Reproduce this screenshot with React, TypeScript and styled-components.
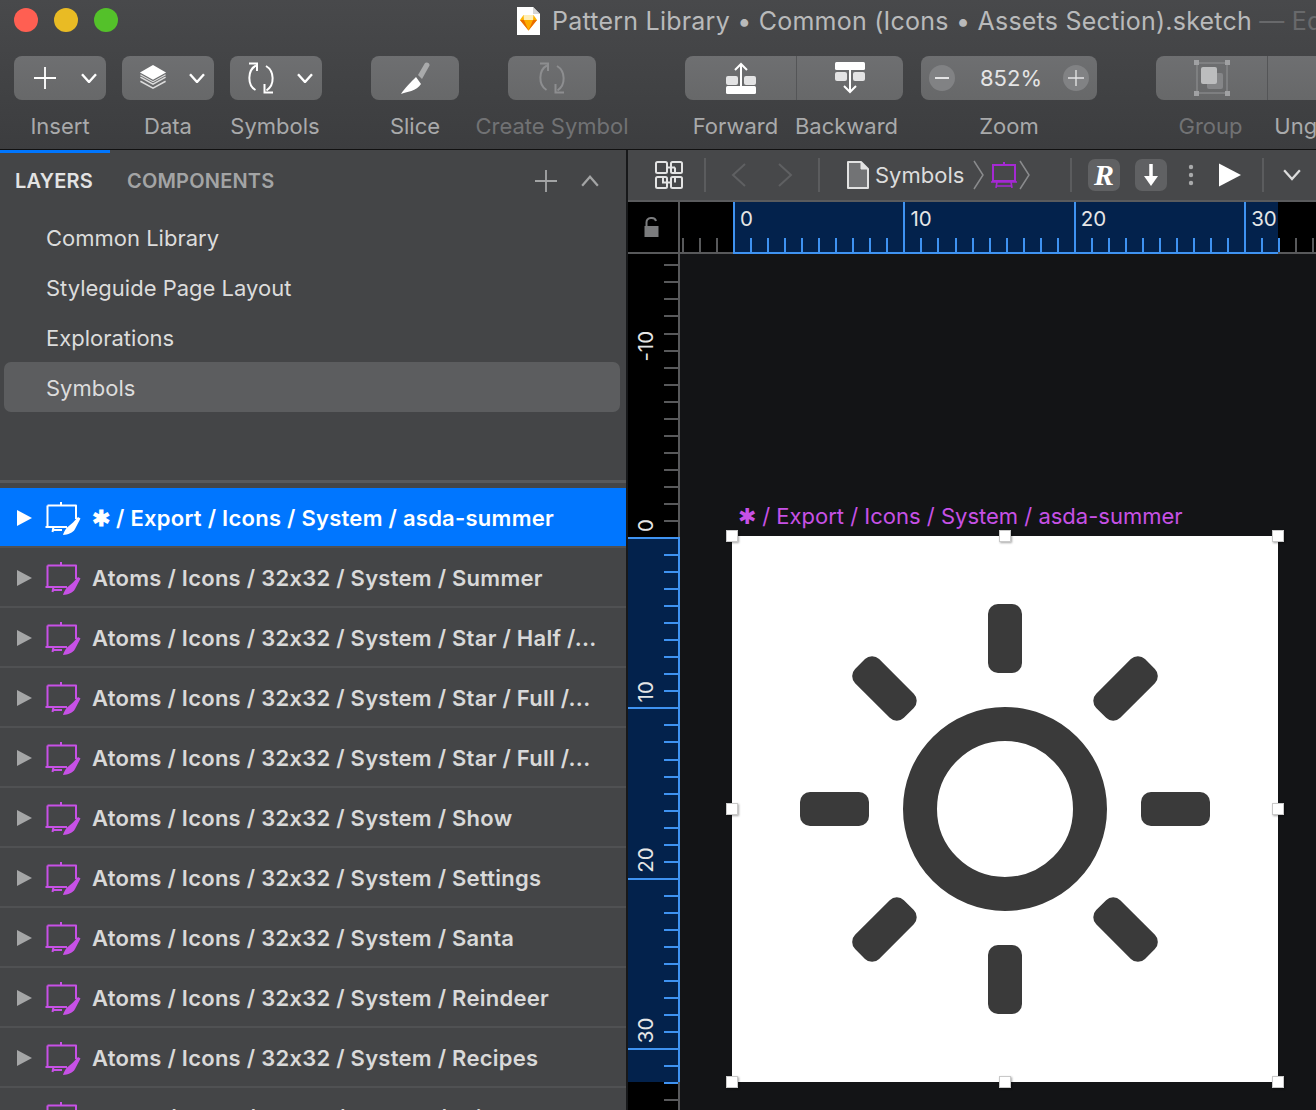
import React from "react";
import styled, { createGlobalStyle } from "styled-components";

const FONT = `Inter, "Liberation Sans", sans-serif`;

const GlobalStyle = createGlobalStyle`
  html, body {
    margin: 0;
    padding: 0;
    background: #131416;
    font-family: ${FONT};
    font-feature-settings: "calt" 0;
  }
  * { box-sizing: border-box; }
`;

const BLUE_RULER = "#03224c";
const BLUE_LINE = "#3f93f2";
const GREY_TICK = "#58595b";
const PURPLE = "#c751e6";

const Window = styled.div`
  width: 1316px;
  height: 1110px;
  overflow: hidden;
  display: flex;
  flex-direction: column;
`;

/* ---------- top header ---------- */

const Header = styled.header`
  height: 150px;
  flex: none;
  background: linear-gradient(#48494b, #3c3d3f);
  border-bottom: 1px solid #111;
  overflow: hidden;
`;

const TitleBar = styled.div`
  height: 56px;
  display: flex;
  align-items: flex-start;
  padding: 8px 0 0 14px;
`;

const Light = styled.span<{ $c: string }>`
  width: 24px;
  height: 24px;
  border-radius: 50%;
  background: ${(p) => p.$c};
  margin-right: 16px;
  flex: none;
`;

const DocTitle = styled.div`
  margin-left: 383px;
  margin-top: -2px;
  display: flex;
  align-items: center;
  gap: 12px;
  white-space: nowrap;
`;

const TitleText = styled.span`
  font-size: 25px;
  line-height: 30px;
  color: #b9babb;
  letter-spacing: 0.23px;
  span { color: #68696b; }
`;

const Toolbar = styled.div`
  display: flex;
  padding-left: 14px;
  white-space: nowrap;
`;

const ToolItem = styled.div<{ $w: number; $after?: number }>`
  width: ${(p) => p.$w}px;
  margin-right: ${(p) => p.$after ?? 0}px;
  flex: none;
  display: flex;
  flex-direction: column;
  align-items: center;
`;

const ToolButton = styled.div`
  width: 100%;
  height: 44px;
  background: linear-gradient(#6e6f71, #676869);
  border-radius: 8px;
  display: flex;
  align-items: center;
  justify-content: center;
`;

const SplitButton = styled(ToolButton)<{ $pl: number }>`
  justify-content: space-between;
  padding: 0 9px 0 ${(p) => p.$pl}px;
`;

const ToolLabel = styled.div<{ $dim?: boolean; $shift?: number }>`
  font-size: 22px;
  line-height: 26px;
  margin-top: 13px;
  color: ${(p) => (p.$dim ? "#717274" : "#a9aaab")};
  transform: translateX(${(p) => p.$shift ?? 0}px);
`;

const SplitPair = styled.div`
  display: flex;
  width: 218px;
  margin-right: 18px;
  flex: none;
`;

const Half = styled(ToolItem)`
  margin-right: 0;
`;

const RightSeg = styled(ToolButton)`
  border-radius: 0 8px 8px 0;
  border-left: 1px solid #545557;
`;

const LeftSeg = styled(ToolButton)`
  border-radius: 8px 0 0 8px;
`;

const ZoomButton = styled(ToolButton)`
  justify-content: space-between;
  padding: 0 8px;
  color: #e4e4e5;
  font-size: 22px;
`;

const ZoomValue = styled.span`
  margin-left: 4px;
`;

const ZoomCircle = styled.span`
  width: 26px;
  height: 26px;
  border-radius: 50%;
  background: #818284;
  display: flex;
  align-items: center;
  justify-content: center;
`;

/* ---------- body ---------- */

const Body = styled.div`
  flex: 1;
  display: flex;
  min-height: 0;
`;

const Sidebar = styled.aside`
  width: 628px;
  flex: none;
  background: #444547;
  border-right: 2px solid #17181a;
  overflow: hidden;
  position: relative;
`;

const TabIndicator = styled.div`
  width: 110px;
  height: 3px;
  background: #0076ff;
`;

const Tabs = styled.div`
  height: 59px;
  display: flex;
  align-items: center;
  padding: 0 27px 3px 15px;
  font-size: 20px;
  font-weight: 600;
  letter-spacing: 0.2px;
`;

const Tab = styled.span<{ $active?: boolean }>`
  color: ${(p) => (p.$active ? "#e3e3e3" : "#a3a4a5")};
  margin-right: 34px;
`;

const TabActions = styled.div`
  margin-left: auto;
  display: flex;
  align-items: center;
  gap: 24px;
`;

const Pages = styled.div`
  height: 271px;
  border-bottom: 3px solid #58595b;
`;

const PageRow = styled.div<{ $selected?: boolean }>`
  height: 50px;
  margin: 0 6px 0 4px;
  padding: 2px 0 0 42px;
  display: flex;
  align-items: center;
  font-size: 22px;
  color: #dcdcdc;
  border-radius: 7px;
  background: ${(p) => (p.$selected ? "#5c5d5f" : "transparent")};
`;

const Layers = styled.div`
  padding-top: 5px;
`;

const LayerRow = styled.div<{ $selected?: boolean }>`
  height: 60px;
  display: flex;
  align-items: center;
  padding: 2px 0 0 17px;
  font-size: 22px;
  font-weight: 600;
  letter-spacing: 0.26px;
  white-space: nowrap;
  color: ${(p) => (p.$selected ? "#fff" : "#d9d9d9")};
  background: ${(p) => (p.$selected ? "#0076ff" : "transparent")};
  background-clip: padding-box;
  border-bottom: 2px solid #505153;
`;

const Disclosure = styled.span<{ $selected?: boolean }>`
  width: 0;
  height: 0;
  flex: none;
  border-left: 15px solid ${(p) => (p.$selected ? "#fff" : "#a5a6a7")};
  border-top: 8px solid transparent;
  border-bottom: 8px solid transparent;
  margin-right: 13px;
`;

const LayerName = styled.span`
  margin-left: 11px;
`;

/* ---------- canvas side ---------- */

const Main = styled.main`
  flex: 1;
  min-width: 0;
  display: flex;
  flex-direction: column;
  background: #131416;
`;

const CanvasBar = styled.div`
  height: 52px;
  flex: none;
  background: #47484a;
  border-bottom: 2px solid #5a5b5d;
  display: flex;
  align-items: center;
  overflow: hidden;
  color: #dcdcdc;
  font-size: 22px;
  white-space: nowrap;
`;

const BarSlot = styled.div<{ $w: number; $pad?: number }>`
  width: ${(p) => p.$w}px;
  flex: none;
  display: flex;
  align-items: center;
  justify-content: ${(p) => (p.$pad !== undefined ? "flex-start" : "center")};
  padding-left: ${(p) => p.$pad ?? 0}px;
`;

const BarRule = styled.span`
  width: 2px;
  height: 34px;
  background: #5b5c5e;
  flex: none;
`;

const Crumb = styled.span`
  margin: 0 9px 0 6px;
`;

const CrumbGap = styled.span<{ $w: number }>`
  width: ${(p) => p.$w}px;
  flex: none;
`;

const PluginButton = styled.span`
  width: 32px;
  height: 32px;
  flex: none;
  border-radius: 7px;
  background: #606163;
  display: flex;
  align-items: center;
  justify-content: center;
  color: #fff;
  font-family: "Liberation Serif", serif;
  font-style: italic;
  font-weight: 700;
  font-size: 30px;
`;

const RulerRow = styled.div`
  height: 52px;
  flex: none;
  display: flex;
  background: #000;
`;

const RulerCorner = styled.div`
  width: 52px;
  flex: none;
  display: flex;
  align-items: center;
  justify-content: center;
  padding-right: 2px;
  border-right: 2px solid ${GREY_TICK};
  border-bottom: 2px solid ${GREY_TICK};
`;

const CanvasRow = styled.div`
  flex: 1;
  display: flex;
  min-height: 0;
`;

const Canvas = styled.div`
  flex: 1;
  position: relative;
  overflow: hidden;
  background: #131416;
`;

const ArtboardTitle = styled.div`
  position: absolute;
  left: 58px;
  top: 248px;
  font-size: 22px;
  line-height: 28px;
  color: ${PURPLE};
  white-space: nowrap;
`;

const Artboard = styled.div`
  position: absolute;
  left: 52px;
  top: 282px;
  width: 546px;
  height: 546px;
  background: #fff;
`;

const Handle = styled.span<{ $x: number; $y: number }>`
  position: absolute;
  left: ${(p) => p.$x * 546 - 6}px;
  top: ${(p) => p.$y * 546 - 6}px;
  width: 12px;
  height: 12px;
  background: #fff;
  border: 1px solid #c9c9c9;
  box-shadow: 1px 1px 2px rgba(0, 0, 0, 0.35);
`;

const SunSvg = styled.svg`
  display: block;
`;

/* ---------- small drawings ---------- */

const Plus = ({ size = 22, color = "#fff", w = 2 }: { size?: number; color?: string; w?: number }) => (
  <svg width={size} height={size} viewBox="0 0 24 24">
    <path d="M12 0V24M0 12H24" stroke={color} strokeWidth={w} fill="none" />
  </svg>
);

const Chevron = ({ up, color = "#fff", w = 2.4, width = 16 }: { up?: boolean; color?: string; w?: number; width?: number }) => (
  <svg width={width} height={width * 0.65} viewBox="0 0 16 10.4">
    <path d={up ? "M1 9.6L8 1.6L15 9.6" : "M1 1.2L8 9L15 1.2"} stroke={color} strokeWidth={w} fill="none" />
  </svg>
);

const LayersIcon = () => (
  <svg width="28" height="30" viewBox="0 0 30 30">
    <path d="M15 1L29 9L15 17L1 9Z" fill="#fff" />
    <path d="M1.5 14L15 21.5L28.5 14M1.5 18.5L15 26L28.5 18.5" stroke="#dcdcdc" strokeWidth="1.6" fill="none" />
    <path d="M1.5 11.5L15 19L28.5 11.5" stroke="#dcdcdc" strokeWidth="1.2" fill="none" />
  </svg>
);

const SyncIcon = ({ color = "#fff" }: { color?: string }) => (
  <svg width="30" height="34" viewBox="0 0 30 34">
    <path d="M10 4.5C1.5 9 1 24 9.5 29" stroke={color} strokeWidth="2" fill="none" />
    <path d="M3 2.5H11V10" stroke={color} strokeWidth="2" fill="none" />
    <path d="M20 5C28.5 10 29 24 20.5 29.5" stroke={color} strokeWidth="2" fill="none" />
    <path d="M18.5 23V31.5H27" stroke={color} strokeWidth="2" fill="none" />
  </svg>
);

const KnifeIcon = () => (
  <svg width="32" height="34" viewBox="0 0 32 34">
    <path d="M2 33C7 31 18 30 22 23L17 16C12 21 5 28 2 33Z" fill="#fff" />
    <path d="M19 14L26 2C27.5 0.5 31 2 30.5 4.5L23 18Z" fill="#a9aaab" />
  </svg>
);

const ForwardIcon = () => (
  <svg width="32" height="32" viewBox="0 0 32 32">
    <rect x="1" y="14" width="12" height="9" rx="2" fill="#e3e3e4" />
    <rect x="19" y="14" width="12" height="9" rx="2" fill="#e3e3e4" />
    <rect x="1" y="24" width="30" height="8" rx="1.5" fill="#fff" />
    <path d="M16 24V2M10 8L16 2L22 8" stroke="#fff" strokeWidth="2" fill="none" />
  </svg>
);

const BackwardIcon = () => (
  <svg width="32" height="32" viewBox="0 0 32 32">
    <rect x="1" y="0" width="30" height="8" rx="1.5" fill="#fff" />
    <rect x="1" y="10" width="12" height="9" rx="2" fill="#e3e3e4" />
    <rect x="19" y="10" width="12" height="9" rx="2" fill="#e3e3e4" />
    <path d="M16 8V30M10 24L16 30L22 24" stroke="#fff" strokeWidth="2" fill="none" />
  </svg>
);

const GroupIcon = () => (
  <svg width="36" height="36" viewBox="0 0 36 36">
    <rect x="3" y="3" width="30" height="30" fill="none" stroke="#858688" strokeWidth="1.5" />
    <rect x="0" y="0" width="5" height="5" fill="#a0a1a3" />
    <rect x="31" y="0" width="5" height="5" fill="#a0a1a3" />
    <rect x="0" y="31" width="5" height="5" fill="#a0a1a3" />
    <rect x="31" y="31" width="5" height="5" fill="#a0a1a3" />
    <rect x="13" y="13" width="16" height="16" rx="2" fill="#858688" />
    <rect x="7" y="7" width="16" height="17" rx="2" fill="#bcbdbe" />
  </svg>
);

const UngroupIcon = () => (
  <svg width="12" height="34" viewBox="0 0 12 34">
    <rect x="0" y="0" width="5" height="5" fill="#fff" />
    <rect x="0" y="29" width="5" height="5" fill="#fff" />
    <rect x="3" y="6" width="9" height="18" rx="2" fill="#e3e3e4" />
  </svg>
);

const DocSketchIcon = () => (
  <svg width="23" height="28" viewBox="0 0 23 28">
    <path d="M0 0H16L23 7V28H0Z" fill="#fff" />
    <path d="M16 0V7H23Z" fill="#d5d5d5" />
    <path d="M6.5 8H16.5L20 13L11.5 23.5L3 13Z" fill="#fdb300" />
    <path d="M3 13H20L11.5 23.5Z" fill="#ea6c00" />
    <path d="M7 13H16L11.5 23.5Z" fill="#fdad00" />
    <path d="M6.5 8L7 13H16L16.5 8Z" fill="#feeeb8" />
  </svg>
);

const EaselIcon = ({ color, knife }: { color: string; knife: string }) => (
  <svg width="36" height="34" viewBox="0 0 36 34">
    <path d="M16 1V4" stroke={color} strokeWidth="2" />
    <path d="M2.5 4.5H31V18M2.5 4.5V26" stroke={color} strokeWidth="2" fill="none" strokeLinejoin="round" />
    <path d="M0.5 26H22M8.5 26L7.5 31M7.5 29H17" stroke={color} strokeWidth="2" fill="none" />
    <path d="M18 34C23 33.5 28 32 30 28L35.5 17.5L33 16L28 21.5L21.5 27C20 29.5 18.5 31.5 18 34Z" fill={knife} />
  </svg>
);

const SmallEasel = () => (
  <svg width="26" height="26" viewBox="0 0 26 26">
    <path d="M13 0V3" stroke="#a529d3" strokeWidth="2" />
    <rect x="2" y="3" width="22" height="16" fill="none" stroke="#a529d3" strokeWidth="2" />
    <path d="M0 20H26M6 20L5 26M20 20L21 26M5 24H21" stroke="#a529d3" strokeWidth="1.6" fill="none" />
  </svg>
);

const BreadcrumbCaret = () => (
  <svg width="12" height="30" viewBox="0 0 12 30">
    <path d="M1 1L10 15L1 29" stroke="#8a8b8d" strokeWidth="1.5" fill="none" />
  </svg>
);

const ViewIcon = () => (
  <svg width="28" height="30" viewBox="0 0 28 30">
    <g fill="none" stroke="#e4e4e4" strokeWidth="2">
      <rect x="1" y="2" width="11" height="11" rx="1.5" />
      <rect x="16" y="2" width="11" height="11" rx="1.5" />
      <rect x="1" y="17" width="11" height="11" rx="1.5" />
      <rect x="16" y="17" width="11" height="11" rx="1.5" />
      <path d="M12 7.5H20M20 7.5V13M8 17V22.5H16M20 17V22.5" />
    </g>
  </svg>
);

const NavArrow = ({ left }: { left?: boolean }) => (
  <svg width="16" height="24" viewBox="0 0 16 24">
    <path d={left ? "M14 1L2 12L14 23" : "M2 1L14 12L2 23"} stroke="#5f6062" strokeWidth="2" fill="none" />
  </svg>
);

const PageIcon = () => (
  <svg width="22" height="28" viewBox="0 0 22 28">
    <path d="M1 1H14L21 8V27H1Z" fill="#727375" stroke="#e2e2e2" strokeWidth="2" strokeLinejoin="round" />
    <path d="M14 1V8H21Z" fill="#e2e2e2" stroke="#e2e2e2" strokeWidth="1" />
  </svg>
);

const DownArrow = () => (
  <svg width="16" height="24" viewBox="0 0 16 24">
    <path d="M8 1V16" stroke="#fff" strokeWidth="3.5" />
    <path d="M1 13H15L8 23Z" fill="#fff" />
  </svg>
);

const DotsIcon = () => (
  <svg width="6" height="22" viewBox="0 0 6 22">
    <circle cx="3" cy="3" r="2.2" fill="#a9aaab" />
    <circle cx="3" cy="11" r="2.2" fill="#a9aaab" />
    <circle cx="3" cy="19" r="2.2" fill="#a9aaab" />
  </svg>
);

const PlayIcon = () => (
  <svg width="24" height="24" viewBox="0 0 24 24">
    <path d="M1 0.5L23 12L1 23.5Z" fill="#fff" />
  </svg>
);

const LockIcon = () => (
  <svg width="16" height="22" viewBox="0 0 16 22">
    <path d="M2.5 11V6.5C2.5 1 11 0.5 12 5" stroke="#7b7c7e" strokeWidth="2" fill="none" />
    <rect x="0.5" y="10" width="14" height="11" fill="#7b7c7e" />
  </svg>
);

/* ---------- rulers ---------- */

const UNIT = 17.04;

const HRuler = () => {
  // ruler starts at x = 680 on the page, zero sits at 733
  const zero = 53;
  const end = 598;
  const ticks = [];
  for (let i = -3; i <= 37; i++) {
    const x = Math.round(zero + i * UNIT);
    const inside = x >= zero && x <= end;
    const major = i % 10 === 0 && inside;
    ticks.push(
      <rect key={i} x={x} y={major ? 0 : 36} width="2" height={major ? 50 : 14} fill={inside ? BLUE_LINE : GREY_TICK} />
    );
  }
  return (
    <svg width="636" height="52" viewBox="0 0 636 52" style={{ display: "block", flex: "none" }}>
      <rect x={zero} y="0" width={end - zero} height="50" fill={BLUE_RULER} />
      {ticks}
      <rect x="0" y="50" width="636" height="2" fill={GREY_TICK} />
      <rect x={zero} y="50" width={end - zero} height="2" fill={BLUE_LINE} />
      {[0, 10, 20, 30].map((n) => (
        <text key={n} x={zero + n * UNIT + 7} y="24" fontSize="20.5" fill="#e6e6e6" fontFamily={FONT}>
          {n}
        </text>
      ))}
    </svg>
  );
};

const VRuler = () => {
  // ruler starts at y = 254 on the page, zero sits at 537
  const zero = 283;
  const end = 828;
  const ticks = [];
  for (let i = -17; i <= 50; i++) {
    const y = Math.round(zero + i * UNIT);
    const inside = y >= zero && y <= end;
    const major = i % 10 === 0 && inside;
    ticks.push(
      <rect key={i} x={major ? 0 : 36} y={y} width={major ? 50 : 14} height="2" fill={inside ? BLUE_LINE : GREY_TICK} />
    );
  }
  return (
    <svg width="52" height="856" viewBox="0 0 52 856" style={{ display: "block", flex: "none", background: "#000" }}>
      <rect x="0" y={zero} width="50" height={end - zero} fill={BLUE_RULER} />
      {ticks}
      <rect x="50" y="0" width="2" height="856" fill={GREY_TICK} />
      <rect x="50" y={zero} width="2" height={end - zero} fill={BLUE_LINE} />
      {[-10, 0, 10, 20, 30].map((n) => {
        const y = zero + n * UNIT - 5;
        return (
          <text key={n} transform={`translate(25 ${y}) rotate(-90)`} fontSize="20.5" fill="#e6e6e6" fontFamily={FONT}>
            {n}
          </text>
        );
      })}
    </svg>
  );
};

const SunIcon = () => {
  const angles = [0, 45, 90, 135, 180, 225, 270, 315];
  return (
    <SunSvg width="546" height="546" viewBox="0 0 546 546">
      <circle cx="273" cy="273" r="85" fill="none" stroke="#3a3a3a" strokeWidth="34" />
      {angles.map((a) => (
        <rect
          key={a}
          x="256"
          y="68"
          width="34"
          height="69"
          rx="10"
          fill="#3a3a3a"
          transform={`rotate(${a} 273 273)`}
        />
      ))}
    </SunSvg>
  );
};

/* ---------- data ---------- */

const pages = ["Common Library", "Styleguide Page Layout", "Explorations", "Symbols"];

const layers = [
  "✱ / Export / Icons / System / asda-summer",
  "Atoms / Icons / 32x32 / System / Summer",
  "Atoms / Icons / 32x32 / System / Star / Half /...",
  "Atoms / Icons / 32x32 / System / Star / Full /...",
  "Atoms / Icons / 32x32 / System / Star / Full /...",
  "Atoms / Icons / 32x32 / System / Show",
  "Atoms / Icons / 32x32 / System / Settings",
  "Atoms / Icons / 32x32 / System / Santa",
  "Atoms / Icons / 32x32 / System / Reindeer",
  "Atoms / Icons / 32x32 / System / Recipes",
  "Atoms / Icons / 32x32 / System / Print",
];

const handles = [
  [0, 0],
  [0.5, 0],
  [1, 0],
  [0, 0.5],
  [1, 0.5],
  [0, 1],
  [0.5, 1],
  [1, 1],
];

const App = () => (
  <>
    <GlobalStyle />
    <Window>
      <Header>
        <TitleBar>
          <Light $c="#ff5f52" />
          <Light $c="#e9bb24" />
          <Light $c="#54c12a" />
          <DocTitle>
            <DocSketchIcon />
            <TitleText>
              Pattern Library • Common (Icons • Assets Section).sketch <span>— Edited</span>
            </TitleText>
          </DocTitle>
        </TitleBar>
        <Toolbar>
          <ToolItem $w={92} $after={16}>
            <SplitButton $pl={20}>
              <Plus />
              <Chevron />
            </SplitButton>
            <ToolLabel>Insert</ToolLabel>
          </ToolItem>
          <ToolItem $w={92} $after={16}>
            <SplitButton $pl={17}>
              <LayersIcon />
              <Chevron />
            </SplitButton>
            <ToolLabel>Data</ToolLabel>
          </ToolItem>
          <ToolItem $w={92} $after={49}>
            <SplitButton $pl={16}>
              <SyncIcon />
              <Chevron />
            </SplitButton>
            <ToolLabel $shift={-1}>Symbols</ToolLabel>
          </ToolItem>
          <ToolItem $w={88} $after={49}>
            <ToolButton>
              <KnifeIcon />
            </ToolButton>
            <ToolLabel>Slice</ToolLabel>
          </ToolItem>
          <ToolItem $w={88} $after={89}>
            <ToolButton>
              <SyncIcon color="#8d8e90" />
            </ToolButton>
            <ToolLabel $dim>Create Symbol</ToolLabel>
          </ToolItem>
          <SplitPair>
            <Half $w={111}>
              <LeftSeg>
                <ForwardIcon />
              </LeftSeg>
              <ToolLabel $shift={-5}>Forward</ToolLabel>
            </Half>
            <Half $w={107}>
              <RightSeg>
                <BackwardIcon />
              </RightSeg>
              <ToolLabel $shift={-3}>Backward</ToolLabel>
            </Half>
          </SplitPair>
          <ToolItem $w={176} $after={59}>
            <ZoomButton>
              <ZoomCircle>
                <svg width="14" height="14" viewBox="0 0 14 14">
                  <path d="M0 7H14" stroke="#e4e4e5" strokeWidth="2" />
                </svg>
              </ZoomCircle>
              <ZoomValue>852%</ZoomValue>
              <ZoomCircle>
                <Plus size={16} color="#e4e4e5" />
              </ZoomCircle>
            </ZoomButton>
            <ToolLabel>Zoom</ToolLabel>
          </ToolItem>
          <Half $w={111}>
            <LeftSeg>
              <GroupIcon />
            </LeftSeg>
            <ToolLabel $dim $shift={-1}>Group</ToolLabel>
          </Half>
          <Half $w={111}>
            <RightSeg>
              <UngroupIcon />
            </RightSeg>
            <ToolLabel $shift={-3}>Ungroup</ToolLabel>
          </Half>
        </Toolbar>
      </Header>
      <Body>
        <Sidebar>
          <TabIndicator />
          <Tabs>
            <Tab $active>LAYERS</Tab>
            <Tab>COMPONENTS</Tab>
            <TabActions>
              <Plus size={22} color="#a3a4a5" />
              <Chevron up color="#a3a4a5" width={18} w={2} />
            </TabActions>
          </Tabs>
          <Pages>
            {pages.map((p) => (
              <PageRow key={p} $selected={p === "Symbols"}>
                {p}
              </PageRow>
            ))}
          </Pages>
          <Layers>
            {layers.map((l, i) => (
              <LayerRow key={i} $selected={i === 0}>
                <Disclosure $selected={i === 0} />
                <EaselIcon color={i === 0 ? "#fff" : PURPLE} knife={i === 0 ? "#fff" : PURPLE} />
                <LayerName>{l}</LayerName>
              </LayerRow>
            ))}
          </Layers>
        </Sidebar>
        <Main>
          <CanvasBar>
            <BarSlot $w={76} $pad={27}>
              <ViewIcon />
            </BarSlot>
            <BarRule />
            <BarSlot $w={112}>
              <NavArrow left />
              <CrumbGap $w={30} />
              <NavArrow />
            </BarSlot>
            <BarRule />
            <BarSlot $w={250} $pad={27}>
              <PageIcon />
              <Crumb>Symbols</Crumb>
              <BreadcrumbCaret />
              <CrumbGap $w={6} />
              <SmallEasel />
              <CrumbGap $w={2} />
              <BreadcrumbCaret />
            </BarSlot>
            <BarRule />
            <BarSlot $w={64}>
              <PluginButton>R</PluginButton>
            </BarSlot>
            <BarSlot $w={30}>
              <PluginButton>
                <DownArrow />
              </PluginButton>
            </BarSlot>
            <BarSlot $w={50}>
              <DotsIcon />
            </BarSlot>
            <BarSlot $w={28}>
              <PlayIcon />
            </BarSlot>
            <BarSlot $w={18} />
            <BarRule />
            <BarSlot $w={56}>
              <Chevron color="#dcdcdc" width={18} w={2} />
            </BarSlot>
          </CanvasBar>
          <RulerRow>
            <RulerCorner>
              <LockIcon />
            </RulerCorner>
            <HRuler />
          </RulerRow>
          <CanvasRow>
            <VRuler />
            <Canvas>
              <ArtboardTitle>✱ / Export / Icons / System / asda-summer</ArtboardTitle>
              <Artboard>
                <SunIcon />
                {handles.map(([x, y]) => (
                  <Handle key={`${x}-${y}`} $x={x} $y={y} />
                ))}
              </Artboard>
            </Canvas>
          </CanvasRow>
        </Main>
      </Body>
    </Window>
  </>
);

export default App;
